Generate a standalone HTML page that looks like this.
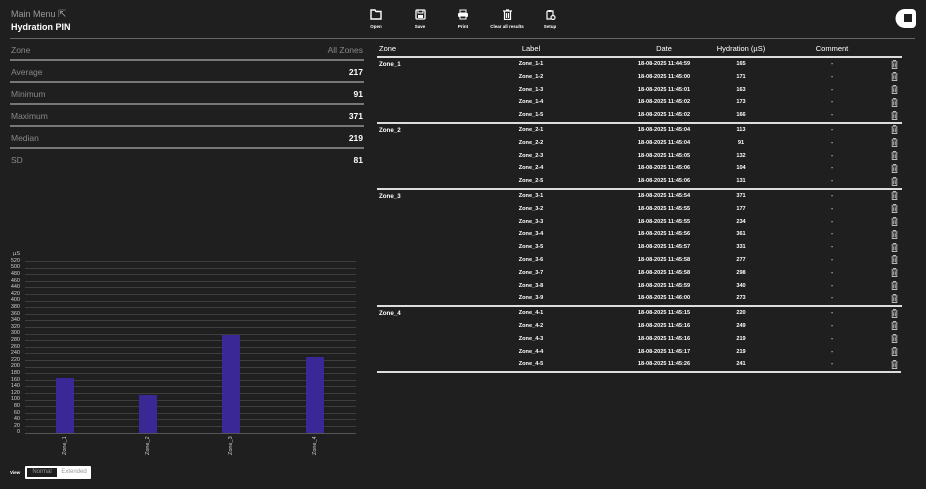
<!DOCTYPE html>
<html><head><meta charset="utf-8">
<style>
body{margin:0;width:926px;height:489px;background:#1f1f1f;font-family:"Liberation Sans",sans-serif;color:#fff;position:relative;overflow:hidden}
.a{position:absolute}
.st{position:absolute;left:10px;width:354px;height:20px;border-bottom:2px solid #777;font-size:8.5px}
.st span{position:absolute;top:6px}
.st .l{left:1px;color:#888}
.st .r{right:1px;font-weight:bold;color:#fff}
.tb{position:absolute;font-size:4.5px;font-weight:bold;text-align:center;width:40px}
.tb svg{display:block;margin:0 auto 4px}
.row{position:relative;height:12.8px;font-size:5.6px;font-weight:bold}
.row span{position:absolute;top:3px;transform:translateX(-50%);white-space:nowrap}
.row .z{transform:none;left:2px;font-size:6.2px}
.row i{position:absolute;left:514px;top:2px;width:7px;height:9px;background:url() }
.grp{border-top:2px solid #ddd}
.yl{position:absolute;left:0;width:20px;text-align:right;font-size:5.5px;color:#ccc}
.gl{position:absolute;left:25px;width:331px;height:1px;background:#3e3e3e}
.bar{position:absolute;width:18px;background:#3a2896}
.xl{position:absolute;font-size:5.5px;color:#ccc;transform:rotate(-90deg);transform-origin:left top;white-space:nowrap}
.t{position:absolute;left:514px;top:1.5px}
</style></head><body>
<svg width="0" height="0" style="position:absolute"><defs><symbol id="tr" viewBox="0 0 7 9"><path d="M0.5 1.8h6M2.3 1V0.5h2.4V1M1.2 2v6.5h4.6V2M2.7 3.3v4M4.3 3.3v4" fill="none" stroke="#bbb" stroke-width="0.9"/></symbol></defs></svg>
<div class="a" style="left:11px;top:9px;font-size:9px;color:#999">Main Menu <span style="font-size:10px">⇱</span></div>
<div class="a" style="left:11px;top:22px;font-size:9px;font-weight:bold">Hydration PIN</div>

<div class="tb" style="left:356px;top:9px"><svg width="12" height="11" viewBox="0 0 12 11"><path d="M1 1h4l1 1.5h5v7.5h-10z" fill="none" stroke="#fff" stroke-width="1.4"/></svg>Open</div>
<div class="tb" style="left:400px;top:9px"><svg width="11" height="11" viewBox="0 0 11 11"><rect x="1" y="1" width="9" height="9" rx="1" fill="none" stroke="#fff" stroke-width="1.3"/><rect x="3" y="1" width="5" height="3" fill="none" stroke="#fff"/><rect x="3" y="6" width="5" height="3" fill="#fff"/></svg>Save</div>
<div class="tb" style="left:443px;top:9px"><svg width="12" height="11" viewBox="0 0 12 11"><rect x="3" y="1" width="6" height="3" fill="none" stroke="#fff"/><rect x="1" y="4" width="10" height="4" rx="1" fill="#fff"/><rect x="3" y="7" width="6" height="3" fill="#1f1f1f" stroke="#fff"/></svg>Print</div>
<div class="tb" style="left:487px;top:9px"><svg width="11" height="11" viewBox="0 0 11 11"><path d="M1 2h9M4 1h3M2.5 2.5v8h6v-8M4.5 4v5M6.5 4v5" fill="none" stroke="#fff" stroke-width="1.2"/></svg>Clear all results</div>
<div class="tb" style="left:530px;top:9px"><svg width="11" height="11" viewBox="0 0 11 11"><path d="M2 2h6v4M2 2v8h4" fill="none" stroke="#fff" stroke-width="1.2"/><rect x="3.5" y="1" width="3" height="2" fill="#fff"/><circle cx="8" cy="8.5" r="2" fill="none" stroke="#fff" stroke-width="1.2"/></svg>Setup</div>

<svg class="a" style="left:895px;top:8px" width="22" height="21" viewBox="0 0 22 21"><path d="M10 1h7a4 4 0 0 1 4 4v11a4 4 0 0 1-4 4h-7a9.5 9.5 0 0 1 0-19z" fill="#fff"/><rect x="9" y="6" width="8" height="8" fill="#1f1f1f"/></svg>

<div class="a" style="left:10px;top:38px;width:905px;height:1px;background:#666"></div>

<div class="st" style="top:39px"><span class="l">Zone</span><span class="r" style="font-weight:normal;color:#888">All Zones</span></div>
<div class="st" style="top:61px"><span class="l">Average</span><span class="r">217</span></div>
<div class="st" style="top:83px"><span class="l">Minimum</span><span class="r">91</span></div>
<div class="st" style="top:105px"><span class="l">Maximum</span><span class="r">371</span></div>
<div class="st" style="top:127px"><span class="l">Median</span><span class="r">219</span></div>
<div class="st" style="top:149px;border:0"><span class="l">SD</span><span class="r">81</span></div>

<div class="yl" style="top:251px">µS</div>
<div class="yl" style="top:258px">520</div><div class="gl" style="top:261px"></div>
<div class="yl" style="top:264px">500</div><div class="gl" style="top:268px"></div>
<div class="yl" style="top:271px">480</div><div class="gl" style="top:274px"></div>
<div class="yl" style="top:278px">460</div><div class="gl" style="top:281px"></div>
<div class="yl" style="top:284px">440</div><div class="gl" style="top:287px"></div>
<div class="yl" style="top:291px">420</div><div class="gl" style="top:294px"></div>
<div class="yl" style="top:297px">400</div><div class="gl" style="top:301px"></div>
<div class="yl" style="top:304px">380</div><div class="gl" style="top:307px"></div>
<div class="yl" style="top:311px">360</div><div class="gl" style="top:314px"></div>
<div class="yl" style="top:317px">340</div><div class="gl" style="top:320px"></div>
<div class="yl" style="top:324px">320</div><div class="gl" style="top:327px"></div>
<div class="yl" style="top:330px">300</div><div class="gl" style="top:334px"></div>
<div class="yl" style="top:337px">280</div><div class="gl" style="top:340px"></div>
<div class="yl" style="top:344px">260</div><div class="gl" style="top:347px"></div>
<div class="yl" style="top:350px">240</div><div class="gl" style="top:353px"></div>
<div class="yl" style="top:357px">220</div><div class="gl" style="top:360px"></div>
<div class="yl" style="top:363px">200</div><div class="gl" style="top:367px"></div>
<div class="yl" style="top:370px">180</div><div class="gl" style="top:373px"></div>
<div class="yl" style="top:377px">160</div><div class="gl" style="top:380px"></div>
<div class="yl" style="top:383px">140</div><div class="gl" style="top:386px"></div>
<div class="yl" style="top:390px">120</div><div class="gl" style="top:393px"></div>
<div class="yl" style="top:396px">100</div><div class="gl" style="top:400px"></div>
<div class="yl" style="top:403px">80</div><div class="gl" style="top:406px"></div>
<div class="yl" style="top:410px">60</div><div class="gl" style="top:413px"></div>
<div class="yl" style="top:416px">40</div><div class="gl" style="top:419px"></div>
<div class="yl" style="top:423px">20</div><div class="gl" style="top:426px"></div>
<div class="yl" style="top:429px">0</div><div class="gl" style="top:433px;background:#555"></div>
<div class="bar" style="left:56px;top:378px;height:55px"></div>
<div class="bar" style="left:139px;top:395px;height:38px"></div>
<div class="bar" style="left:222px;top:335px;height:98px"></div>
<div class="bar" style="left:306px;top:357px;height:76px"></div>
<div class="xl" style="left:62px;top:455px">Zone_1</div>
<div class="xl" style="left:145px;top:455px">Zone_2</div>
<div class="xl" style="left:228px;top:455px">Zone_3</div>
<div class="xl" style="left:312px;top:455px">Zone_4</div>

<div class="a" style="left:10px;top:470px;font-size:4.5px;font-weight:bold">View</div>
<div class="a" style="left:25px;top:466px;width:66px;height:13px;background:#fff;border-radius:1px"></div>
<div class="a" style="left:27px;top:468px;width:30px;height:9px;background:#1f1f1f;font-size:6px;color:#999;text-align:center;line-height:9px">Normal</div>
<div class="a" style="left:58px;top:468px;width:32px;height:9px;font-size:6px;color:#999;text-align:center;line-height:9px">Extended</div>

<div class="a" style="left:377px;top:42px;width:525px">
<div class="row" style="height:14px;font-size:7.5px;font-weight:normal"><span class="z" style="font-size:7.5px;top:2px">Zone</span><span style="left:154px;top:2px">Label</span><span style="left:287px;top:2px">Date</span><span style="left:364px;top:2px">Hydration (µS)</span><span style="left:455px;top:2px">Comment</span></div>
<div style="border-top:2px solid #ddd"></div>
<div class="row"><span class="z">Zone_1</span><span style="left:154px">Zone_1-1</span><span style="left:287px">18-08-2025 11:44:59</span><span style="left:364px">165</span><span style="left:455px">-</span><svg class="t" width="7" height="9"><use href="#tr"/></svg></div>
<div class="row"><span style="left:154px">Zone_1-2</span><span style="left:287px">18-08-2025 11:45:00</span><span style="left:364px">171</span><span style="left:455px">-</span><svg class="t" width="7" height="9"><use href="#tr"/></svg></div>
<div class="row"><span style="left:154px">Zone_1-3</span><span style="left:287px">18-08-2025 11:45:01</span><span style="left:364px">163</span><span style="left:455px">-</span><svg class="t" width="7" height="9"><use href="#tr"/></svg></div>
<div class="row"><span style="left:154px">Zone_1-4</span><span style="left:287px">18-08-2025 11:45:02</span><span style="left:364px">173</span><span style="left:455px">-</span><svg class="t" width="7" height="9"><use href="#tr"/></svg></div>
<div class="row"><span style="left:154px">Zone_1-5</span><span style="left:287px">18-08-2025 11:45:02</span><span style="left:364px">166</span><span style="left:455px">-</span><svg class="t" width="7" height="9"><use href="#tr"/></svg></div>
<div class="row grp"><span class="z">Zone_2</span><span style="left:154px">Zone_2-1</span><span style="left:287px">18-08-2025 11:45:04</span><span style="left:364px">113</span><span style="left:455px">-</span><svg class="t" width="7" height="9"><use href="#tr"/></svg></div>
<div class="row"><span style="left:154px">Zone_2-2</span><span style="left:287px">18-08-2025 11:45:04</span><span style="left:364px">91</span><span style="left:455px">-</span><svg class="t" width="7" height="9"><use href="#tr"/></svg></div>
<div class="row"><span style="left:154px">Zone_2-3</span><span style="left:287px">18-08-2025 11:45:05</span><span style="left:364px">132</span><span style="left:455px">-</span><svg class="t" width="7" height="9"><use href="#tr"/></svg></div>
<div class="row"><span style="left:154px">Zone_2-4</span><span style="left:287px">18-08-2025 11:45:06</span><span style="left:364px">104</span><span style="left:455px">-</span><svg class="t" width="7" height="9"><use href="#tr"/></svg></div>
<div class="row"><span style="left:154px">Zone_2-5</span><span style="left:287px">18-08-2025 11:45:06</span><span style="left:364px">131</span><span style="left:455px">-</span><svg class="t" width="7" height="9"><use href="#tr"/></svg></div>
<div class="row grp"><span class="z">Zone_3</span><span style="left:154px">Zone_3-1</span><span style="left:287px">18-08-2025 11:45:54</span><span style="left:364px">371</span><span style="left:455px">-</span><svg class="t" width="7" height="9"><use href="#tr"/></svg></div>
<div class="row"><span style="left:154px">Zone_3-2</span><span style="left:287px">18-08-2025 11:45:55</span><span style="left:364px">177</span><span style="left:455px">-</span><svg class="t" width="7" height="9"><use href="#tr"/></svg></div>
<div class="row"><span style="left:154px">Zone_3-3</span><span style="left:287px">18-08-2025 11:45:55</span><span style="left:364px">234</span><span style="left:455px">-</span><svg class="t" width="7" height="9"><use href="#tr"/></svg></div>
<div class="row"><span style="left:154px">Zone_3-4</span><span style="left:287px">18-08-2025 11:45:56</span><span style="left:364px">361</span><span style="left:455px">-</span><svg class="t" width="7" height="9"><use href="#tr"/></svg></div>
<div class="row"><span style="left:154px">Zone_3-5</span><span style="left:287px">18-08-2025 11:45:57</span><span style="left:364px">331</span><span style="left:455px">-</span><svg class="t" width="7" height="9"><use href="#tr"/></svg></div>
<div class="row"><span style="left:154px">Zone_3-6</span><span style="left:287px">18-08-2025 11:45:58</span><span style="left:364px">277</span><span style="left:455px">-</span><svg class="t" width="7" height="9"><use href="#tr"/></svg></div>
<div class="row"><span style="left:154px">Zone_3-7</span><span style="left:287px">18-08-2025 11:45:58</span><span style="left:364px">298</span><span style="left:455px">-</span><svg class="t" width="7" height="9"><use href="#tr"/></svg></div>
<div class="row"><span style="left:154px">Zone_3-8</span><span style="left:287px">18-08-2025 11:45:59</span><span style="left:364px">340</span><span style="left:455px">-</span><svg class="t" width="7" height="9"><use href="#tr"/></svg></div>
<div class="row"><span style="left:154px">Zone_3-9</span><span style="left:287px">18-08-2025 11:46:00</span><span style="left:364px">273</span><span style="left:455px">-</span><svg class="t" width="7" height="9"><use href="#tr"/></svg></div>
<div class="row grp"><span class="z">Zone_4</span><span style="left:154px">Zone_4-1</span><span style="left:287px">18-08-2025 11:45:15</span><span style="left:364px">220</span><span style="left:455px">-</span><svg class="t" width="7" height="9"><use href="#tr"/></svg></div>
<div class="row"><span style="left:154px">Zone_4-2</span><span style="left:287px">18-08-2025 11:45:16</span><span style="left:364px">249</span><span style="left:455px">-</span><svg class="t" width="7" height="9"><use href="#tr"/></svg></div>
<div class="row"><span style="left:154px">Zone_4-3</span><span style="left:287px">18-08-2025 11:45:16</span><span style="left:364px">219</span><span style="left:455px">-</span><svg class="t" width="7" height="9"><use href="#tr"/></svg></div>
<div class="row"><span style="left:154px">Zone_4-4</span><span style="left:287px">18-08-2025 11:45:17</span><span style="left:364px">219</span><span style="left:455px">-</span><svg class="t" width="7" height="9"><use href="#tr"/></svg></div>
<div class="row"><span style="left:154px">Zone_4-5</span><span style="left:287px">18-08-2025 11:45:26</span><span style="left:364px">241</span><span style="left:455px">-</span><svg class="t" width="7" height="9"><use href="#tr"/></svg></div>
<div style="border-top:2px solid #ddd;width:524px"></div>
</div>
</body></html>
